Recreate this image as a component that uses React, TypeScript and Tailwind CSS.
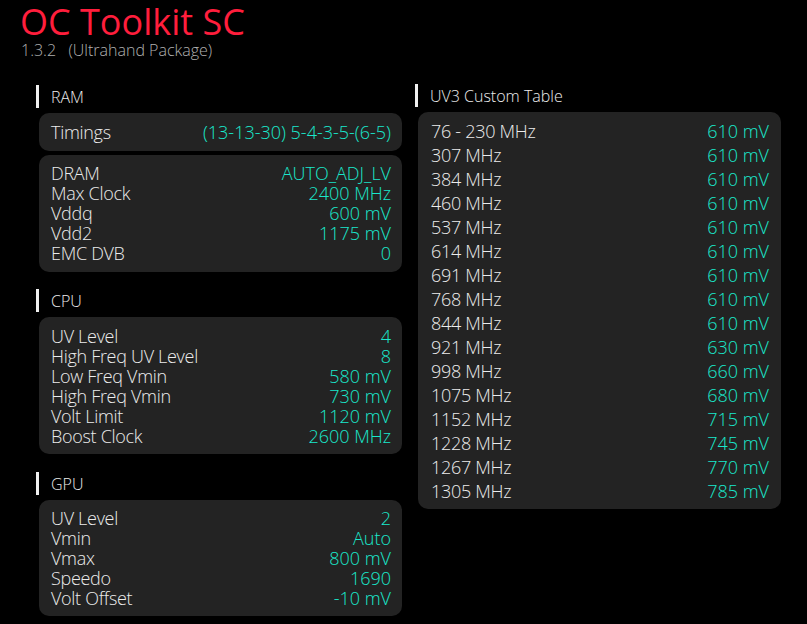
import React from "react";

type Row = [string, string];

const ram: Row[] = [
  ["DRAM", "AUTO_ADJ_LV"],
  ["Max Clock", "2400 MHz"],
  ["Vddq", "600 mV"],
  ["Vdd2", "1175 mV"],
  ["EMC DVB", "0"],
];

const cpu: Row[] = [
  ["UV Level", "4"],
  ["High Freq UV Level", "8"],
  ["Low Freq Vmin", "580 mV"],
  ["High Freq Vmin", "730 mV"],
  ["Volt Limit", "1120 mV"],
  ["Boost Clock", "2600 MHz"],
];

const gpu: Row[] = [
  ["UV Level", "2"],
  ["Vmin", "Auto"],
  ["Vmax", "800 mV"],
  ["Speedo", "1690"],
  ["Volt Offset", "-10 mV"],
];

const uv3: Row[] = [
  ["76 - 230 MHz", "610 mV"],
  ["307 MHz", "610 mV"],
  ["384 MHz", "610 mV"],
  ["460 MHz", "610 mV"],
  ["537 MHz", "610 mV"],
  ["614 MHz", "610 mV"],
  ["691 MHz", "610 mV"],
  ["768 MHz", "610 mV"],
  ["844 MHz", "610 mV"],
  ["921 MHz", "630 mV"],
  ["998 MHz", "660 mV"],
  ["1075 MHz", "680 mV"],
  ["1152 MHz", "715 mV"],
  ["1228 MHz", "745 mV"],
  ["1267 MHz", "770 mV"],
  ["1305 MHz", "785 mV"],
];

function Header({ title, className = "" }: { title: string; className?: string }) {
  return (
    <div className={"flex items-start h-[23px] " + className}>
      <div className="w-[3px] h-[23px] bg-[#f0f0f0]" />
      <span className="ml-[12px] mt-[1px] text-[16px] leading-[23px] text-[#ececec]">{title}</span>
    </div>
  );
}

function Rows({ rows, tall = false }: { rows: Row[]; tall?: boolean }) {
  return (
    <>
      {rows.map(([k, v], i) => (
        <div
          key={i}
          className={
            "flex justify-between text-[18px] " + (tall ? "leading-[24px] h-[24px]" : "leading-[20px] h-[20px]")
          }
        >
          <span className="text-[#ececec] tracking-[-0.3px]">{k}</span>
          <span className="text-[#1ae8cc]">{v}</span>
        </div>
      ))}
    </>
  );
}

export default function App() {
  return (
    <div className="w-[807px] h-[624px] bg-black overflow-hidden font-['Open_Sans',sans-serif] font-light">
      <div className="pl-[20px] text-[36px] leading-[44px] text-[#ff1e3c] font-normal">OC Toolkit SC</div>
      <div className="pl-[21px] -mt-[2px] text-[16px] leading-[16px] text-[#b0b0b0] whitespace-pre">
        {"1.3.2   (Ultrahand Package)"}
      </div>
      <div className="flex pl-[36px] mt-[27px] gap-[13px]">
        <div className="w-[366px] flex flex-col">
          <Header title="RAM" />
          <div className="ml-[3px] mt-[5px] rounded-[10px] bg-[#232323] pl-[12px] pr-[11px] pt-[9px] pb-[9px]">
            <Rows rows={[["Timings", "(13-13-30) 5-4-3-5-(6-5)"]]} />
          </div>
          <div className="ml-[3px] mt-[4px] rounded-[10px] bg-[#232323] pl-[12px] pr-[11px] pt-[8px] pb-[9px]">
            <Rows rows={ram} />
          </div>
          <Header title="CPU" className="mt-[17px]" />
          <div className="ml-[3px] mt-[5px] rounded-[10px] bg-[#232323] pl-[12px] pr-[11px] pt-[9px] pb-[8px]">
            <Rows rows={cpu} />
          </div>
          <Header title="GPU" className="mt-[18px]" />
          <div className="ml-[3px] mt-[5px] rounded-[10px] bg-[#232323] pl-[12px] pr-[11px] pt-[8px] pb-[8px]">
            <Rows rows={gpu} />
          </div>
        </div>
        <div className="w-[366px] flex flex-col">
          <Header title="UV3 Custom Table" className="-mt-[1px]" />
          <div className="ml-[3px] mt-[5px] rounded-[10px] bg-[#232323] pl-[13px] pr-[12px] pt-[7px] pb-[6px]">
            <Rows rows={uv3} tall />
          </div>
        </div>
      </div>
    </div>
  );
}
